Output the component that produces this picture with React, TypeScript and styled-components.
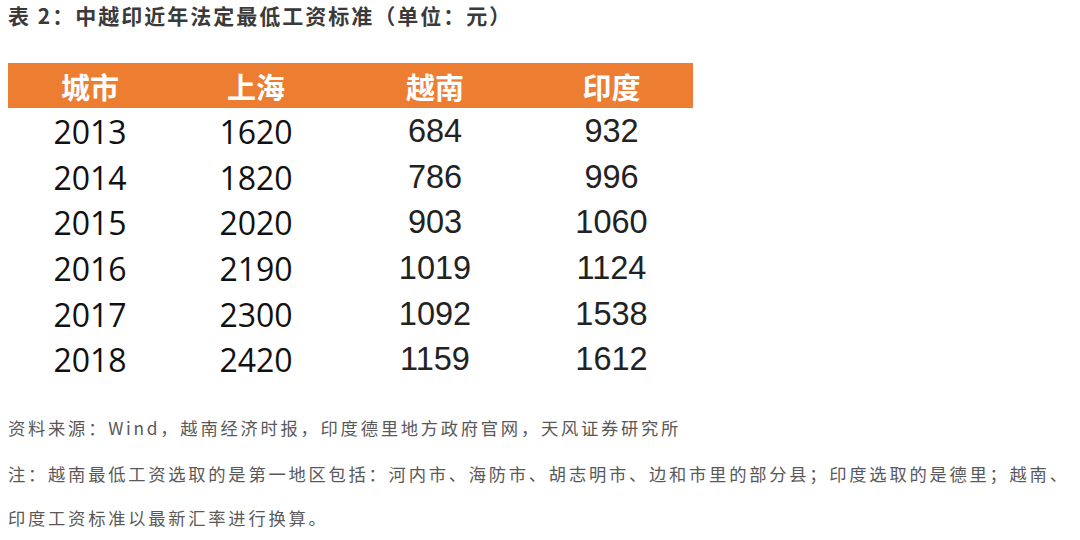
import React from 'react';
import styled, {createGlobalStyle} from 'styled-components';

const GlobalStyle = createGlobalStyle`
  html, body {
    margin: 0;
    padding: 0;
    background: #ffffff;
  }
`;

const Page = styled.div`
  width: 1080px;
  height: 540px;
  box-sizing: border-box;
  padding: 0 8px;
  overflow: hidden;
  font-family: 'Noto Sans CJK SC', 'Noto Sans', sans-serif;
`;

const Title = styled.div`
  height: 63px;
  line-height: 30px;
  font-size: 21px;
  font-weight: 700;
  letter-spacing: 2px;
  color: #3a3a3a;
`;

const Table = styled.div`
  display: grid;
  grid-template-columns: 164px 168px 190px 163px;
  grid-auto-rows: 45.7px;
`;

const HeaderCell = styled.div`
  display: flex;
  align-items: center;
  justify-content: center;
  height: 45px;
  background: #ed7d31;
  color: #ffffff;
  font-size: 29px;
  font-weight: 700;
`;

const Cell = styled.div<{ $arial?: boolean }>`
  display: flex;
  align-items: center;
  justify-content: center;
  font-family: ${p => p.$arial ? "'Liberation Sans', Arial, sans-serif" : "'Open Sans', 'Noto Sans', sans-serif"};
  font-size: ${p => p.$arial ? '32.5px' : '32px'};
  color: ${p => p.$arial ? '#222222' : '#111111'};
`;

const Notes = styled.div`
  display: flex;
  flex-direction: column;
  gap: 2px;
  margin-top: 23px;
`;

const Note = styled.p`
  margin: 0;
  font-size: 17.3px;
  line-height: 44px;
  letter-spacing: 2.75px;
  color: #595959;
`;

const headers = ['城市', '上海', '越南', '印度'];

const rows = [
  ['2013', '1620', '684', '932'],
  ['2014', '1820', '786', '996'],
  ['2015', '2020', '903', '1060'],
  ['2016', '2190', '1019', '1124'],
  ['2017', '2300', '1092', '1538'],
  ['2018', '2420', '1159', '1612'],
];

const App = () => {
  return (
    <>
      <GlobalStyle/>
      <Page>
        <Title>表 2：中越印近年法定最低工资标准（单位：元）</Title>
        <Table>
          {headers.map(h => <HeaderCell key={h}>{h}</HeaderCell>)}
          {rows.map(row => row.map((v, i) => (
            <Cell key={row[0] + i} $arial={i > 1}>{v}</Cell>
          )))}
        </Table>
        <Notes>
          <Note>资料来源：Wind，越南经济时报，印度德里地方政府官网，天风证券研究所</Note>
          <Note>注：越南最低工资选取的是第一地区包括：河内市、海防市、胡志明市、边和市里的部分县；印度选取的是德里；越南、印度工资标准以最新汇率进行换算。</Note>
        </Notes>
      </Page>
    </>
  );
}

export default App;
